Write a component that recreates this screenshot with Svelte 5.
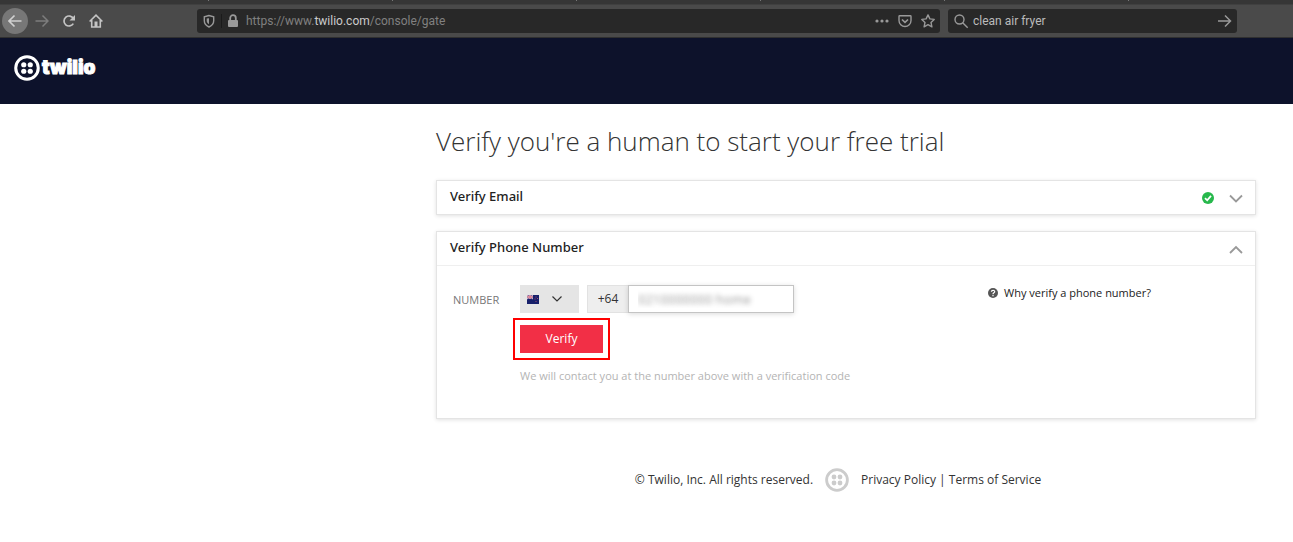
<script lang="ts">
  let search: string = 'clean air fryer'
  let phone: string = '0210000000 home'
  let country: string = 'NZ'
  let emailOpen: boolean = false
  let phoneOpen: boolean = true

  const holes = [
    [9, 9],
    [15, 9],
    [9, 15],
    [15, 15],
  ]
</script>

<style>
  :global(body) {
    background: #ffffff;
    color: #333333;
    font-family: 'Open Sans', 'Noto Sans', sans-serif;
    font-size: 12px;
    line-height: 18px;
  }
  svg {
    display: block;
    flex: none;
    fill: none;
    stroke: currentColor;
  }
  button,
  input,
  select {
    box-sizing: border-box;
    margin: 0;
    padding: 0;
    border: 0;
    border-radius: 0;
    background: none;
    color: inherit;
    font: inherit;
  }
  a {
    color: inherit;
    text-decoration: none;
  }

  /* browser bar */
  .tabs {
    display: flex;
    height: 4px;
    padding-left: 208px;
    background: #363636;
    border-bottom: 1px solid #404040;
  }
  .tabs span {
    flex: 0 0 184px;
    box-sizing: border-box;
    height: 1px;
    border-left: 1px solid #777777;
  }
  .toolbar {
    display: flex;
    align-items: center;
    height: 32px;
    padding: 0 56px 0 2px;
    background: #4a4a4a;
    border-bottom: 1px solid #303030;
    color: #c4c4c4;
    font-family: Roboto, sans-serif;
  }
  .nav {
    display: flex;
    flex: none;
    width: 195px;
  }
  .nav button {
    display: flex;
    align-items: center;
    justify-content: center;
    width: 27px;
    height: 26px;
  }
  .nav .back {
    width: 26px;
    border-radius: 50%;
    background: #777777;
    color: #d0d0d0;
  }
  .nav .forward {
    color: #7d7d7d;
  }
  .field {
    display: flex;
    align-items: center;
    box-sizing: border-box;
    height: 24px;
    border-radius: 3px;
    background: #282828;
    color: #999999;
  }
  .address {
    flex: 1;
    padding: 0 5px;
  }
  .address .shield {
    padding-right: 5px;
    border-right: 1px solid #1a1a1a;
  }
  .address .lock {
    margin: 0 7px 0 5px;
  }
  .address .url {
    flex: 1;
    color: #808080;
  }
  .address b {
    color: #cccccc;
    font-weight: 400;
  }
  .address .actions {
    display: flex;
    gap: 9px;
  }
  .search {
    flex: 0 0 289px;
    margin-left: 8px;
    padding: 0 5px;
  }
  .search input {
    flex: 1;
    min-width: 0;
    padding-left: 4px;
    color: #bbbbbb;
    outline: none;
  }

  /* site header */
  .site {
    display: flex;
    box-sizing: border-box;
    height: 66px;
    padding: 16px 14px;
    background: #0d122b;
  }
  .logo {
    display: flex;
    align-items: center;
    gap: 2px;
    height: 27px;
    color: #ffffff;
    font-family: Inter, sans-serif;
    font-size: 19px;
    font-weight: 900;
    line-height: 28px;
    -webkit-text-stroke: 1px #ffffff;
  }

  main {
    margin: 0 37px 0 436px;
    padding-top: 19px;
  }
  h1 {
    margin: 0 0 21px;
    font-size: 26px;
    font-weight: 300;
    line-height: 36px;
  }
  .card {
    margin-bottom: 16px;
    border: 1px solid #e4e4e4;
    box-shadow: 0 1px 4px rgba(0, 0, 0, 0.12);
  }
  .card header {
    display: flex;
    align-items: center;
    height: 33px;
    padding: 0 12px 0 13px;
  }
  .card header.open {
    border-bottom: 1px solid #efefef;
  }
  h2 {
    flex: 1;
    margin: 0;
    padding-bottom: 3px;
    color: #222222;
    font-family: 'Noto Sans', sans-serif;
    font-size: 13px;
    font-weight: 500;
    line-height: 20px;
  }
  .toggle {
    display: flex;
    margin-left: 15px;
    color: #999999;
  }
  .body {
    display: flex;
    align-items: flex-start;
    padding: 19px 17px 33px 16px;
  }
  form {
    display: grid;
    flex: 0 0 535px;
    grid-template-columns: 67px 1fr;
    row-gap: 12px;
  }
  form label {
    padding-top: 2px;
    color: #777777;
    font-size: 11px;
    line-height: 26px;
  }
  .row {
    display: flex;
    height: 28px;
  }
  .country {
    position: relative;
    width: 59px;
    margin-right: 8px;
    background: #e5e5e5;
  }
  .country select {
    width: 100%;
    height: 100%;
    appearance: none;
    color: transparent;
  }
  .country option {
    color: #222222;
  }
  .country svg {
    position: absolute;
    top: 9px;
    left: 7px;
    pointer-events: none;
  }
  .country .caret {
    left: 31px;
  }
  .prefix {
    box-sizing: border-box;
    width: 41px;
    border: 1px solid #e2e2e2;
    border-right: 0;
    background: #eeeeee;
    line-height: 26px;
    text-align: center;
  }
  .phone {
    width: 166px;
    border: 1px solid #c4c4c4;
    box-shadow: 0 1px 5px rgba(0, 0, 0, 0.15);
    padding: 0 9px;
    color: transparent;
    font-size: 13px;
    text-shadow: 0 0 5px #999999;
    outline: none;
  }
  .verify {
    grid-column: 2;
    width: 83px;
    height: 28px;
    background: #f22f46;
    color: #ffffff;
    outline: 2px solid #ff0000;
    outline-offset: 5px;
  }
  .hint {
    grid-column: 2;
    margin: 2px 0 0;
    color: #b4b4b4;
    font-size: 11px;
  }
  .why {
    display: flex;
    align-items: center;
    gap: 6px;
    height: 16px;
    color: #222222;
    font-size: 11px;
  }

  footer {
    display: flex;
    align-items: center;
    justify-content: center;
    gap: 12px;
    margin: 49px 53px 0 436px;
  }
  footer .mark {
    color: #cccccc;
  }
</style>

{#snippet mark(size: number)}
  <svg width={size} height={size} viewBox="0 0 24 24">
    <circle cx="12" cy="12" r="10.4" stroke-width="2.8" />
    {#each holes as [cx, cy]}
      <circle {cx} {cy} r="2.4" fill="currentColor" stroke="none" />
    {/each}
  </svg>
{/snippet}

<div class="tabs">
  {#each Array(6) as _}
    <span></span>
  {/each}
</div>
<div class="toolbar">
  <nav class="nav">
    <button class="back" aria-label="Back">
      <svg width="14" height="14" viewBox="0 0 14 14" stroke-width="1.7"><path d="M13.5 7H1M6.5 1.5 1 7l5.5 5.5" /></svg>
    </button>
    <button class="forward" aria-label="Forward">
      <svg width="14" height="14" viewBox="0 0 14 14" stroke-width="1.5"><path d="M.5 7H13M7.5 1.5 13 7l-5.5 5.5" /></svg>
    </button>
    <button aria-label="Reload">
      <svg width="14" height="14" viewBox="0 0 14 14" stroke-width="1.7"><path d="M11.3 9.6a5 5 0 1 1 .1-5" /><path d="M13 1v5.5H7.5z" fill="currentColor" stroke="none" /></svg>
    </button>
    <button aria-label="Home">
      <svg width="14" height="14" viewBox="0 0 14 14" stroke-width="1.6"><path d="M.6 7.5 7 1.2l6.4 6.3M2.7 6v7h8.6V6" /><path d="M5.5 13V7.5h3V13z" fill="currentColor" stroke="none" /></svg>
    </button>
  </nav>
  <div class="field address">
    <svg class="shield" width="14" height="14" viewBox="0 0 14 14" stroke-width="1.4"><path d="M7 1.5 2.3 2.7v4C2.3 9.5 4 11.6 7 13c3-1.4 4.7-3.5 4.7-6.3v-4z" /><path d="M7 4.2v6C5.5 9.3 4.7 8.2 4.7 6.7V4.6z" fill="currentColor" stroke="none" /></svg>
    <svg class="lock" width="12" height="14" viewBox="0 0 12 14" stroke-width="1.8"><path d="M3.2 7V4a2.8 2.8 0 0 1 5.6 0v3" /><rect x="1" y="6" width="10" height="7" rx="1" fill="currentColor" stroke="none" /></svg>
    <span class="url">https://www.<b>twilio.com</b>/console/gate</span>
    <span class="actions">
      <svg width="14" height="14" viewBox="0 0 14 14"><g fill="currentColor" stroke="none"><circle cx="2" cy="7" r="1.6" /><circle cx="7" cy="7" r="1.6" /><circle cx="12" cy="7" r="1.6" /></g></svg>
      <svg width="14" height="14" viewBox="0 0 14 14" stroke-width="1.4"><path d="M1.7 1.7h10.6q.7 0 .7.7v4.1a6 6 0 0 1-12 0V2.4q0-.7.7-.7z" /><path d="m4 5.5 3 2.8 3-2.8" stroke-width="1.7" /></svg>
      <svg width="14" height="14" viewBox="0 0 14 14" stroke-width="1.4" stroke-linejoin="round"><path d="m7 .9 1.9 4 4.3.5-3.2 3 .9 4.4L7 10.7l-3.9 2.1.9-4.4-3.2-3 4.3-.5z" /></svg>
    </span>
  </div>
  <div class="field search">
    <svg width="16" height="16" viewBox="0 0 16 16" stroke-width="1.4"><circle cx="6.5" cy="6.5" r="4.5" /><path d="m9.7 9.7 5 5" /></svg>
    <input type="text" aria-label="Search" bind:value={search} />
    <svg width="15" height="14" viewBox="0 0 15 14" stroke-width="1.5"><path d="M1 7h12.5M8 1.5 13.5 7 8 12.5" /></svg>
  </div>
</div>

<header class="site">
  <a class="logo" href="/">{@render mark(26)}twilio</a>
</header>

<main>
  <h1>Verify you're a human to start your free trial</h1>

  <section class="card">
    <header>
      <h2>Verify Email</h2>
      <svg width="12" height="12" viewBox="0 0 12 12"><circle cx="6" cy="6" r="6" fill="#27b84c" stroke="none" /><path d="m3 6.2 2.2 2.1L9 3.9" stroke="#ffffff" stroke-width="1.8" /></svg>
      <button class="toggle" aria-label="Toggle email" on:click={() => (emailOpen = !emailOpen)}>
        <svg width="14" height="14" viewBox="0 0 14 14" stroke-width="1.8"><path d="m1 4.5 6 6 6-6" /></svg>
      </button>
    </header>
  </section>

  <section class="card">
    <header class:open={phoneOpen}>
      <h2>Verify Phone Number</h2>
      <button class="toggle" aria-label="Toggle phone number" on:click={() => (phoneOpen = !phoneOpen)}>
        <svg width="14" height="14" viewBox="0 0 14 14" stroke-width="1.8"><path d="m1 11 6-6 6 6" /></svg>
      </button>
    </header>
    {#if phoneOpen}
      <div class="body">
        <form on:submit|preventDefault>
          <label for="phone">NUMBER</label>
          <div class="row">
            <div class="country">
              <select aria-label="Country" bind:value={country}>
                <option value="NZ">NZ</option>
              </select>
              <svg width="12" height="10" viewBox="0 0 12 10">
                <path d="M0 1h12v9H0z" fill="#17206b" stroke="none" />
                <path d="m0 1 6 4M6 1 0 5" stroke="#e8c8d8" />
                <path d="M3 1v4M0 3h6" stroke="#f0d8e0" stroke-width="1.6" />
                <path d="M3 1v4M0 3h6" stroke="#d6506a" stroke-width=".8" />
                <path d="M8.5 2.5h1v1h-1zM7.5 4.5h1v1h-1zM10 4h1v1h-1zM8.5 7h1v1h-1z" fill="#a04870" stroke="none" />
              </svg>
              <svg class="caret" width="12" height="10" viewBox="0 0 12 10" stroke-width="1.2"><path d="M1.500 2.500 6 7l4.500-4.500" /></svg>
            </div>
            <span class="prefix">+64</span>
            <input class="phone" id="phone" type="text" bind:value={phone} />
          </div>
          <button class="verify">Verify</button>
          <p class="hint">We will contact you at the number above with a verification code</p>
        </form>
        <a class="why" href="#why">
          <svg width="10" height="10" viewBox="0 0 10 10"><circle cx="5" cy="5" r="5" fill="#555555" stroke="none" /><path d="M3.4 3.8c0-2 3.3-2 3.3-.1C6.7 4.9 5 4.8 5 6.2M5 7v1.2" stroke="#ffffff" stroke-width="1.2" /></svg>
          Why verify a phone number?
        </a>
      </div>
    {/if}
  </section>
</main>

<footer>
  <span>© Twilio, Inc. All rights reserved.</span>
  <span class="mark">{@render mark(24)}</span>
  <span><a href="#privacy">Privacy Policy</a> | <a href="#terms">Terms of Service</a></span>
</footer>
